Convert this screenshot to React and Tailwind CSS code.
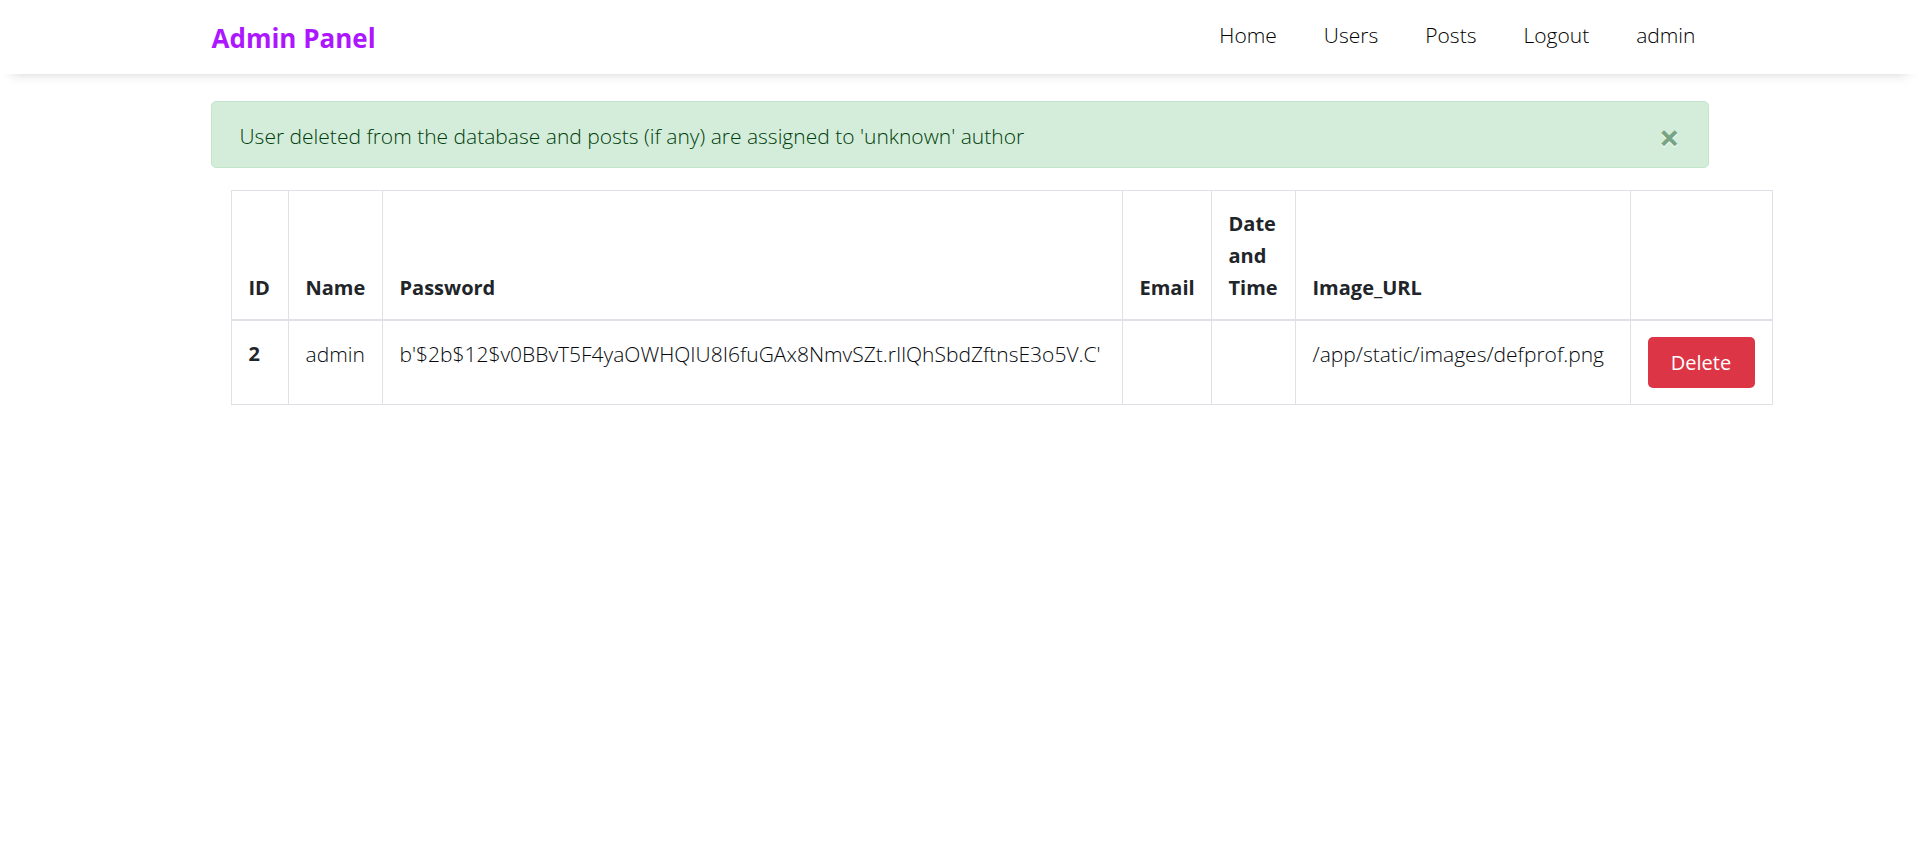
const NAV_LINKS = ["Home", "Users", "Posts", "Logout", "admin"];

const USERS = [
  {
    id: 2,
    name: "admin",
    password: "b'$2b$12$v0BBvT5F4yaOWHQIU8I6fuGAx8NmvSZt.rIlQhSbdZftnsE3o5V.C'",
    email: "",
    date: "",
    image: "/app/static/images/defprof.png",
  },
];

function Navbar() {
  return (
    <nav className="h-[74px] bg-white shadow-[0_10px_12px_-12px_rgba(0,0,0,0.25)]">
      <div className="mx-auto flex max-w-[1496px] items-start justify-between">
        <a href="#" className="pt-[18px] text-[26px] leading-10 font-bold text-[#ad17ff]">
          Admin Panel
        </a>
        <ul className="flex gap-[47px] pt-[19px] pr-3">
          {NAV_LINKS.map((label) => (
            <li key={label}>
              <a href="#" className="text-black">
                {label}
              </a>
            </li>
          ))}
        </ul>
      </div>
    </nav>
  );
}

function Alert() {
  return (
    <div
      role="alert"
      className="flex items-start justify-between rounded-[5px] border border-[#c3e6cb] bg-[#d4edda] pt-[18px] pr-7 pb-[15px] pl-7 text-[#003d0c]"
    >
      <p>User deleted from the database and posts (if any) are assigned to 'unknown' author</p>
      <button
        type="button"
        aria-label="Close"
        className="h-8 pt-[2px] text-[36px] leading-8 font-bold text-[#77a584] [text-shadow:0_1px_0_#fff]"
      >
        ×
      </button>
    </div>
  );
}

function UsersTable() {
  const box = "border border-[#dee2e6] px-[17px] text-left";
  const cell = box + " pt-[17px] pb-[15px]";
  const head = cell + " border-b-2 align-bottom text-[20px] font-bold text-[#212529]";
  return (
    <table className="table-fixed w-[1542px] border-collapse">
      <colgroup>
        <col className="w-[57px]" />
        <col className="w-[94px]" />
        <col className="w-[740px]" />
        <col className="w-[89px]" />
        <col className="w-[84px]" />
        <col className="w-[335px]" />
        <col className="w-[142px]" />
      </colgroup>
      <thead>
        <tr>
          <th scope="col" className={head}>ID</th>
          <th scope="col" className={head}>Name</th>
          <th scope="col" className={head}>Password</th>
          <th scope="col" className={head}>Email</th>
          <th scope="col" className={head}>Date and Time</th>
          <th scope="col" className={head}>Image_URL</th>
          <th scope="col" className={head}></th>
        </tr>
      </thead>
      <tbody className="align-top">
        {USERS.map((user) => (
          <tr key={user.id}>
            <th scope="row" className={cell + " text-[20px] font-bold text-[#212529]"}>{user.id}</th>
            <td className={cell}>{user.name}</td>
            <td className={cell}>{user.password}</td>
            <td className={cell}>{user.email}</td>
            <td className={cell}>{user.date}</td>
            <td className={cell}>{user.image}</td>
            <td className={box + " py-4"}>
              <button
                type="button"
                className="block h-[51px] w-full rounded-[5px] bg-[#dc3545] text-[20px] font-normal text-white"
              >
                Delete
              </button>
            </td>
          </tr>
        ))}
      </tbody>
    </table>
  );
}

export default function App() {
  return (
    <div className="min-h-screen bg-white font-['Open_Sans','Noto_Sans',sans-serif] text-[21px] leading-8 font-light text-[#05080c]">
      <Navbar />
      <main className="mx-auto max-w-[1498px] pt-[27px]">
        <Alert />
        <div className="mt-[22px] pl-5">
          <UsersTable />
        </div>
      </main>
    </div>
  );
}
